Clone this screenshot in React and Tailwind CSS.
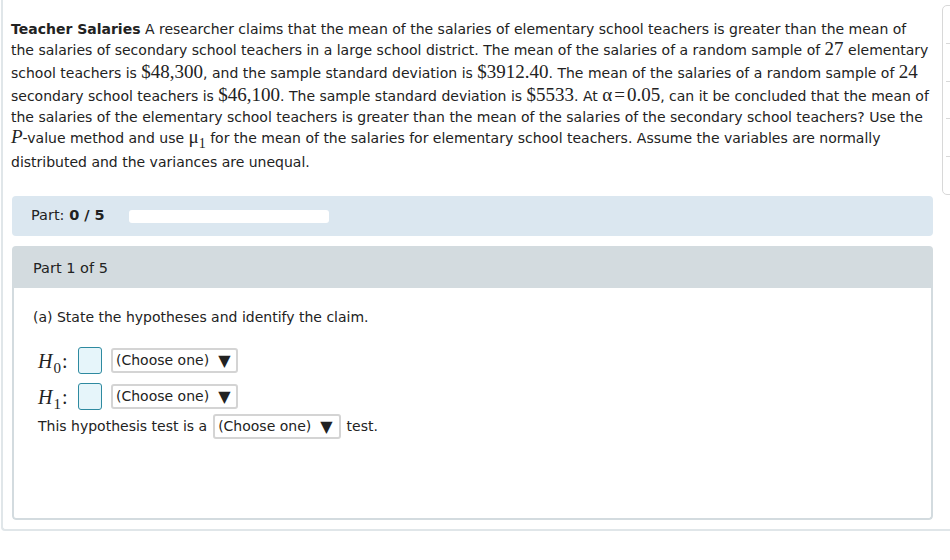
import React from 'react';

const sans = { fontFamily: '"DejaVu Sans", Verdana, sans-serif' };

function M({ children }) {
    return <span className="font-['Liberation_Serif',serif] text-[19px] leading-[1]">{children}</span>;
}

function Dropdown() {
    return (
        <span className="inline-flex items-center h-[25px] pl-[3px] pr-[6px] border-2 border-[#d4d4d4] rounded-[3px] bg-white text-[14px] text-[#222] gap-[9px]">
            (Choose one) <span className="text-[16px] leading-none">▼</span>
        </span>
    );
}

function AnswerBox() {
    return <span className="inline-block w-[24px] h-[27px] border border-[#2e8aa0] rounded-[3px] bg-[#e6f5fa]" />;
}

function Hyp({ sub }) {
    return (
        <span className="inline-flex items-baseline w-[40px] font-['Liberation_Serif',serif] text-[20px] italic leading-none">
            H<span className="not-italic text-[15px] relative top-[5px] ml-[1px]">{sub}</span><span className="not-italic ml-[1px]">:</span>
        </span>
    );
}

export default function App() {
    return (
        <div className="relative w-[950px] h-[560px] overflow-hidden bg-white text-[#222]" style={sans}>
            <div className="ml-[1px] w-[970px] h-[531px] border-l-2 border-b-2 border-[#e0e6e9] rounded-bl-[4px] pl-[8px] pt-[19px]">
                <div className="text-[14px] w-[935px]">
                    <div className="h-[20px] leading-[20px]"><b>Teacher Salaries</b> A researcher claims that the mean of the salaries of elementary school teachers is greater than the mean of</div>
                    <div className="h-[22px] leading-[22px]">the salaries of secondary school teachers in a large school district. The mean of the salaries of a random sample of <M>27</M> elementary</div>
                    <div className="h-[24px] leading-[24px]">school teachers is <M>$48,300</M>, and the sample standard deviation is <M>$3912.40</M>. The mean of the salaries of a random sample of <M>24</M></div>
                    <div className="h-[22px] leading-[22px]">secondary school teachers is <M>$46,100</M>. The sample standard deviation is <M>$5533</M>. At <M>α<span className="mx-[2px]">=</span>0.05</M>, can it be concluded that the mean of</div>
                    <div className="h-[20px] leading-[20px]">the salaries of the elementary school teachers is greater than the mean of the salaries of the secondary school teachers? Use the</div>
                    <div className="h-[22px] leading-[22px]"><span className="font-['Liberation_Serif',serif] text-[19px] italic leading-[1]">P</span>-value method and use <M>μ<span className="text-[14px] relative top-[5px]">1</span></M> for the mean of the salaries for elementary school teachers. Assume the variables are normally</div>
                    <div className="h-[26px] leading-[26px]">distributed and the variances are unequal.</div>
                </div>

                <div className="mt-[21px] w-[921px] ml-[1px]">
                    <div className="h-[40px] bg-[#dbe7f0] rounded-[4px] flex items-center pl-[19px] text-[14.5px]">
                        <span>Part: <b>0 / 5</b></span>
                        <div className="ml-[24px] w-[200px] h-[13px] bg-white rounded-[3px]" />
                    </div>

                    <div className="mt-[10px] rounded-[4px] overflow-hidden">
                        <div className="h-[42px] bg-[#d3dbdf] flex items-center pl-[21px] pt-[4px] text-[14.5px]">Part 1 of 5</div>
                        <div className="h-[232px] border-2 border-t-0 border-[#d3dbdf] rounded-b-[4px] pl-[19px] pt-[19px] text-[14px]">
                            <div className="leading-[20px]">(a) State the hypotheses and identify the claim.</div>
                            <div className="mt-[20px] pl-[5px] flex flex-col">
                                <div className="flex items-center gap-[9px]">
                                    <span className="flex items-center w-[31px]"><Hyp sub="0" /></span>
                                    <AnswerBox />
                                    <Dropdown />
                                </div>
                                <div className="mt-[9px] flex items-center gap-[9px]">
                                    <span className="flex items-center w-[31px]"><Hyp sub="1" /></span>
                                    <AnswerBox />
                                    <Dropdown />
                                </div>
                                <div className="mt-[4px] flex items-center gap-[6px]">
                                    <span>This hypothesis test is a</span>
                                    <Dropdown />
                                    <span>test.</span>
                                </div>
                            </div>
                        </div>
                    </div>
                </div>
            </div>

            <div className="absolute left-[942px] top-[5px] w-[20px] h-[190px] border border-[#d8d8d8] rounded-l-[5px] bg-white flex flex-col justify-evenly">
                <div className="ml-[3px] h-px bg-[#d8d8d8]" />
                <div className="ml-[3px] h-px bg-[#d8d8d8]" />
                <div className="ml-[3px] h-px bg-[#d8d8d8]" />
                <div className="ml-[3px] h-px bg-[#d8d8d8]" />
            </div>
        </div>
    );
}
